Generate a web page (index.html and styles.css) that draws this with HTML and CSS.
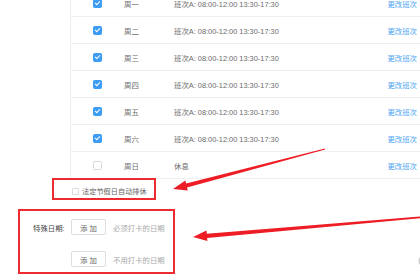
FILE: index.html
```html
<!DOCTYPE html>
<html lang="zh-CN">
   <head>
      <meta charset="UTF-8" />
      <title>考勤班次设置</title>
      <link rel="stylesheet" href="styles.css">
   </head>
   <body>
      <div class="week-table">
         <div class="row"><span class="cb checked"></span><span class="day">周一</span><span class="shift">班次A: 08:00-12:00 13:30-17:30</span><a class="link">更改班次</a></div>
         <div class="row"><span class="cb checked"></span><span class="day">周二</span><span class="shift">班次A: 08:00-12:00 13:30-17:30</span><a class="link">更改班次</a></div>
         <div class="row"><span class="cb checked"></span><span class="day">周三</span><span class="shift">班次A: 08:00-12:00 13:30-17:30</span><a class="link">更改班次</a></div>
         <div class="row"><span class="cb checked"></span><span class="day">周四</span><span class="shift">班次A: 08:00-12:00 13:30-17:30</span><a class="link">更改班次</a></div>
         <div class="row"><span class="cb checked"></span><span class="day">周五</span><span class="shift">班次A: 08:00-12:00 13:30-17:30</span><a class="link">更改班次</a></div>
         <div class="row"><span class="cb checked"></span><span class="day">周六</span><span class="shift">班次A: 08:00-12:00 13:30-17:30</span><a class="link">更改班次</a></div>
         <div class="row"><span class="cb"></span><span class="day">周日</span><span class="shift">休息</span><a class="link">更改班次</a></div>
      </div>

      <div class="mark holiday">
         <span class="cb small"></span>
         <span class="holiday-label">法定节假日自动排休</span>
      </div>

      <div class="mark special">
         <div class="special-row">
            <span class="special-label">特殊日期:</span>
            <button class="btn">添 加</button>
            <span class="hint">必须打卡的日期</span>
         </div>
         <div class="special-row">
            <span class="special-label"></span>
            <button class="btn">添 加</button>
            <span class="hint">不用打卡的日期</span>
         </div>
      </div>

      <!-- 标注箭头 -->
      <svg class="arrows" width="420" height="280" viewBox="0 0 420 280">
         <polygon fill="#ee1c24" points="324.9,148.5 186.1,183.5 185.3,180.4 173,189 187.8,190.5 187,187.4 325.1,149.5" />
         <polygon fill="#ee1c24" points="425,216.2 206.8,233.8 206.5,230.6 193,237 207.4,241 207.1,237.9 425,217.8" />
         <circle cx="425" cy="261" r="6" fill="#f4f4f4" stroke="#bdbdbd" stroke-width="1" />
      </svg>
   </body>
</html>
```

FILE: styles.css
```css
body {
margin: 0;
background: #fff;
font-family: "Liberation Sans", "Noto Sans CJK SC", sans-serif;
font-size: 7.4px;
color: #6b6b6b;
position: relative;
width: 420px;
height: 280px;
overflow: hidden;
}
.week-table {
margin: -10px 0 0 70px;
border-left: 1px solid #ececec;
}
.row {
display: flex;
align-items: center;
height: 26px;
border-bottom: 1px solid #efefef;
padding-left: 22px;
}
.cb {
display: inline-block;
box-sizing: border-box;
width: 9px;
height: 9px;
border: 1px solid #d6d6d6;
border-radius: 1.5px;
background: #fff;
margin-right: 22px;
position: relative;
flex: none;
}
.cb.checked {
background: #3d9df5;
border-color: #3d9df5;
}
.cb.checked::after {
content: "";
position: absolute;
left: 2.2px;
top: 0.6px;
width: 2px;
height: 4px;
border: solid #fff;
border-width: 0 1.3px 1.3px 0;
transform: rotate(45deg);
}
.day {
width: 50px;
}
.shift {
flex: 1;
}
.link {
color: #4aa3f4;
padding-right: 3px;
}
.mark {
border: 2px solid #ec2a2f;
width: fit-content;
}
.holiday {
margin: -1px 0 0 52px;
height: 14px;
padding: 4px 7px 0 18px;
display: flex;
align-items: center;
}
.cb.small {
width: 7px;
height: 7px;
margin-right: 3px;
border-color: #dcdcdc;
border-radius: 1px;
}
.holiday-label {
font-size: 7.2px;
color: #666;
}
.special {
margin: 9px 0 0 18px;
padding: 8px 8px 5px 13px;
display: flex;
flex-direction: column;
gap: 16px;
}
.special-row {
display: flex;
align-items: center;
}
.special-label {
width: 34px;
margin-right: 4px;
color: #454545;
}
.btn {
box-sizing: border-box;
width: 35px;
height: 16px;
padding: 0;
border: 1px solid #dedede;
border-radius: 2px;
background: #fff;
font-family: inherit;
font-size: 7.4px;
color: #666;
margin-right: 7px;
}
.hint {
color: #a8a8a8;
}
.arrows {
position: absolute;
left: 0;
top: 0;
}
```
